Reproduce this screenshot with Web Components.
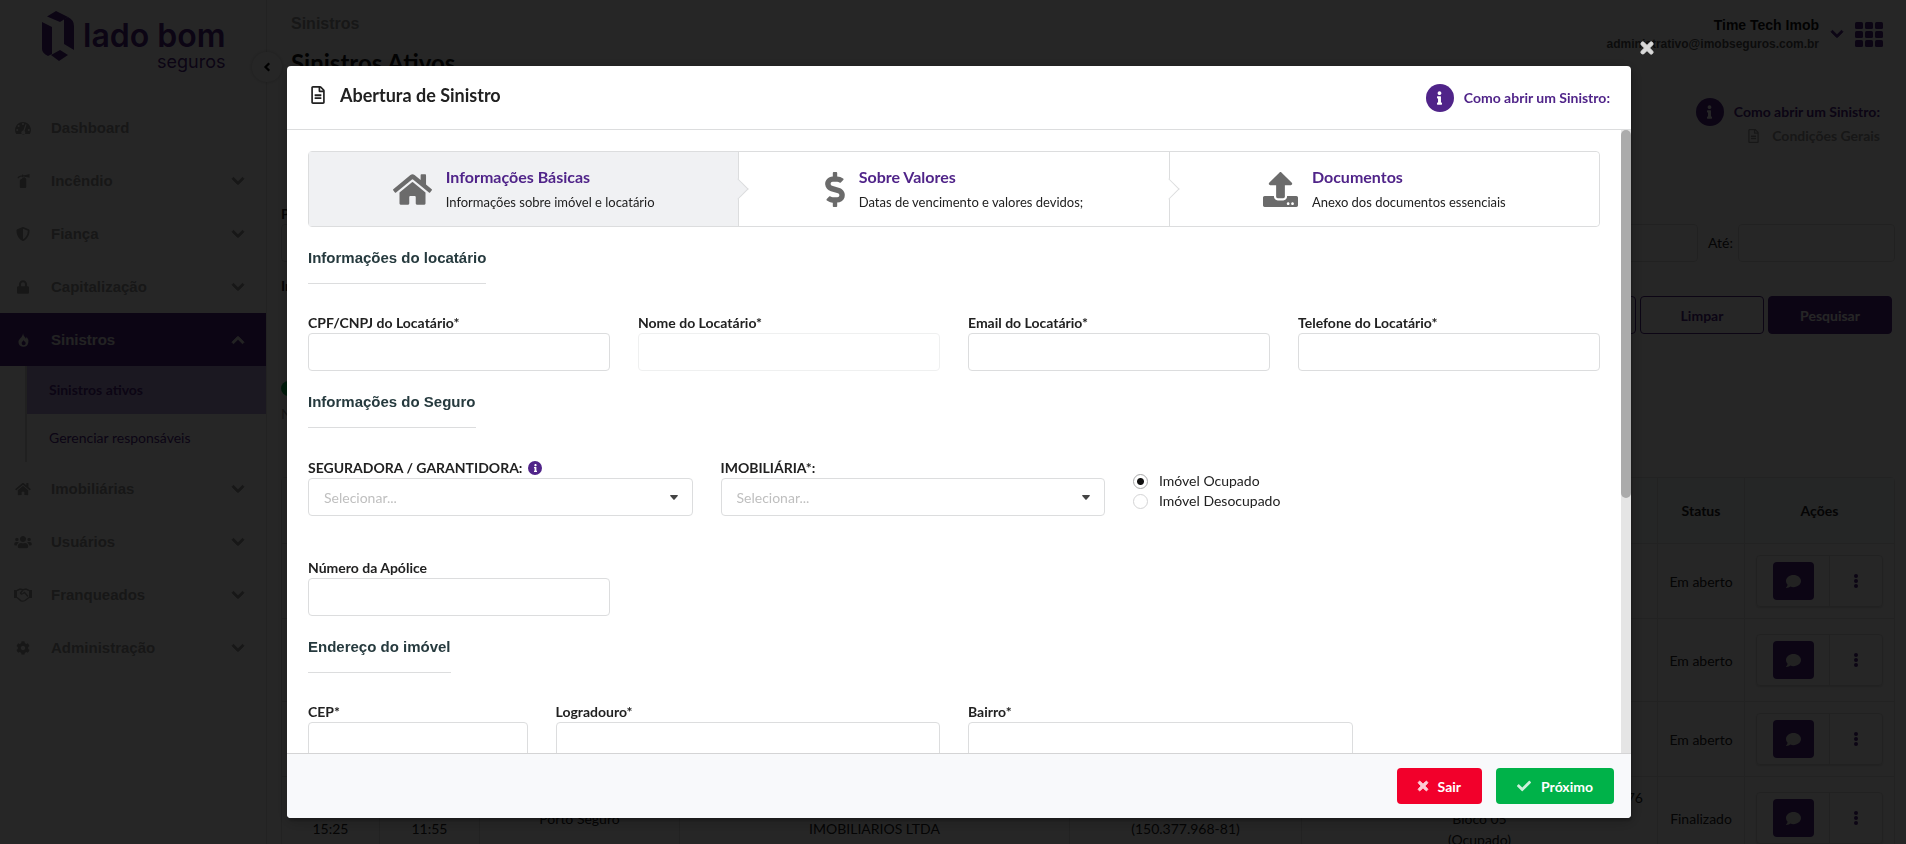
<!DOCTYPE html>
<html lang="pt-BR">
<head>
<meta charset="utf-8">
<title>Sinistros Ativos</title>
<style>
    :root {
        --purple: #502489;
        --line: #dcddde;
        --arial: "Liberation Sans", Arial, sans-serif;
    }
    * { box-sizing: border-box; }
    body {
        margin: 0;
        height: 100vh;
        overflow: hidden;
        font: 14px/20px Lato, sans-serif;
        color: #212121;
        background: #fff;
    }
    .app { display: flex; height: 100vh; overflow: hidden; }
    side-bar { flex: 0 0 267px; }
    main { flex: 1; min-width: 0; padding: 0 11px 0 14px; }
</style>
</head>
<body>
<div class="app">
    <side-bar></side-bar>
    <main>
        <top-bar></top-bar>
        <claims-filter></claims-filter>
        <claims-table></claims-table>
    </main>
</div>

<claim-modal>
    <span slot="title">Abertura de Sinistro</span>

    <step-list>
        <step-item active icon="home" heading="Informações Básicas">Informações sobre imóvel e locatário</step-item>
        <step-item icon="dollar" heading="Sobre Valores">Datas de vencimento e valores devidos;</step-item>
        <step-item icon="upload" heading="Documentos">Anexo dos documentos essenciais</step-item>
    </step-list>

    <form-section heading="Informações do locatário">
        <text-field span="4" label="CPF/CNPJ do Locatário*"></text-field>
        <text-field span="4" label="Nome do Locatário*" disabled></text-field>
        <text-field span="4" label="Email do Locatário*"></text-field>
        <text-field span="4" label="Telefone do Locatário*"></text-field>
    </form-section>

    <form-section heading="Informações do Seguro">
        <select-field span="5" label="SEGURADORA / GARANTIDORA:" info></select-field>
        <select-field span="5" label="IMOBILIÁRIA*:"></select-field>
        <occupancy-choice span="6"></occupancy-choice>
        <text-field span="4" label="Número da Apólice"></text-field>
    </form-section>

    <form-section heading="Endereço do imóvel">
        <text-field span="3" label="CEP*"></text-field>
        <text-field span="5" label="Logradouro*"></text-field>
        <text-field span="5" label="Bairro*"></text-field>
    </form-section>
</claim-modal>

<script>
// name: [viewBox width, viewBox height, markup]
const ICONS = {
    home: [576, 512, '<path d="M280.37 148.26L96 300.11V464a16 16 0 0 0 16 16l112.06-.29a16 16 0 0 0 15.92-16V368a16 16 0 0 1 16-16h64a16 16 0 0 1 16 16v95.64a16 16 0 0 0 16 16.05L464 480a16 16 0 0 0 16-16V300L295.67 148.26a12.19 12.19 0 0 0-15.3 0zM571.6 251.47L488 182.56V44.05a12 12 0 0 0-12-12h-56a12 12 0 0 0-12 12v72.61L318.47 43a48 48 0 0 0-61 0L4.34 251.47a12 12 0 0 0-1.6 16.9l25.5 31A12 12 0 0 0 45.15 301l235.22-193.74a12.19 12.19 0 0 1 15.3 0L530.9 301a12 12 0 0 0 16.9-1.6l25.5-31a12 12 0 0 0-1.7-16.93z"/>'],
    dollar: [288, 512, '<path d="M209.2 233.4l-108-31.6C88.7 198.2 80 186.5 80 173.5c0-16.3 13.2-29.5 29.5-29.5h66.3c12.2 0 24.2 3.7 34.2 10.5 6.1 4.1 14.3 3.1 19.5-2l34.8-34c7.1-6.9 6.1-18.4-1.8-24.5C238 74.8 207.4 64.1 176 64V16c0-8.8-7.2-16-16-16h-32c-8.8 0-16 7.2-16 16v48h-2.5C45.8 64-5.4 118.7.5 183.6c4.2 46.1 39.4 83.6 83.8 96.6l102.5 30c12.5 3.7 21.2 15.3 21.2 28.3 0 16.3-13.2 29.5-29.5 29.5h-66.3C100 368 88 364.3 78 357.5c-6.1-4.1-14.3-3.1-19.5 2l-34.8 34c-7.1 6.9-6.1 18.4 1.8 24.5 24.5 19.2 55.1 29.9 86.5 30v48c0 8.8 7.2 16 16 16h32c8.8 0 16-7.2 16-16v-48.2c46.6-.9 90.3-28.6 105.7-72.7 21.5-61.6-14.6-124.8-72.5-141.7z"/>'],
    upload: [512, 512, '<path d="M296 384h-80c-13.3 0-24-10.7-24-24V192h-87.7c-17.8 0-26.7-21.5-14.1-34.1L242.3 5.7c7.5-7.5 19.8-7.5 27.3 0l152.2 152.2c12.6 12.6 3.7 34.1-14.1 34.1H320v168c0 13.3-10.7 24-24 24zm216-8v112c0 13.3-10.7 24-24 24H24c-13.3 0-24-10.7-24-24V376c0-13.3 10.7-24 24-24h136v8c0 30.9 25.1 56 56 56h80c30.9 0 56-25.1 56-56v-8h136c13.3 0 24 10.7 24 24zm-124 88c0-11-9-20-20-20s-20 9-20 20 9 20 20 20 20-9 20-20zm64 0c0-11-9-20-20-20s-20 9-20 20 9 20 20 20 20-9 20-20z"/>'],
    file: [384, 512, '<path d="M288 248v28c0 6.6-5.4 12-12 12H108c-6.6 0-12-5.4-12-12v-28c0-6.6 5.4-12 12-12h168c6.6 0 12 5.4 12 12zm-12 72H108c-6.6 0-12 5.4-12 12v28c0 6.6 5.4 12 12 12h168c6.6 0 12-5.4 12-12v-28c0-6.6-5.4-12-12-12zm108-188.1V464c0 26.5-21.5 48-48 48H48c-26.5 0-48-21.5-48-48V48C0 21.5 21.5 0 48 0h204.1C264.8 0 277 5.1 286 14.1L369.9 98c9 8.9 14.1 21.2 14.1 33.9zm-128-80V128h76.1L256 51.9zM336 464V176H232c-13.3 0-24-10.7-24-24V48H48v416h288z"/>'],
    info: [192, 512, '<path d="M20 424.229h20V279.771H20c-11.046 0-20-8.954-20-20V212c0-11.046 8.954-20 20-20h112c11.046 0 20 8.954 20 20v212.229h20c11.046 0 20 8.954 20 20V492c0 11.046-8.954 20-20 20H20c-11.046 0-20-8.954-20-20v-47.771c0-11.046 8.954-20 20-20zM96 0C56.235 0 24 32.235 24 72s32.235 72 72 72 72-32.235 72-72S135.764 0 96 0z"/>'],
    times: [352, 512, '<path stroke="currentColor" stroke-width="36" d="M242.72 256l100.07-100.07c12.28-12.28 12.28-32.19 0-44.48l-22.24-22.24c-12.28-12.28-32.19-12.28-44.48 0L176 189.28 75.93 89.21c-12.28-12.28-32.19-12.28-44.48 0L9.21 111.45c-12.28 12.28-12.28 32.19 0 44.48L109.28 256 9.21 356.07c-12.28 12.28-12.28 32.19 0 44.48l22.24 22.24c12.28 12.28 32.2 12.28 44.48 0L176 322.72l100.07 100.07c12.28 12.28 32.2 12.28 44.48 0l22.24-22.24c12.28-12.28 12.28-32.19 0-44.48L242.72 256z"/>'],
    check: [512, 512, '<path d="M173.898 439.404l-166.4-166.4c-9.997-9.997-9.997-26.206 0-36.204l36.203-36.204c9.997-9.998 26.207-9.998 36.204 0L192 312.69 432.095 72.596c9.997-9.997 26.207-9.997 36.204 0l36.203 36.204c9.997 9.997 9.997 26.206 0 36.204l-294.4 294.401c-9.998 9.997-26.207 9.997-36.204-.001z"/>'],
    down: [448, 512, '<path stroke="currentColor" stroke-width="36" d="M207.029 381.476L12.686 187.132c-9.373-9.373-9.373-24.569 0-33.941l22.667-22.667c9.357-9.357 24.522-9.375 33.901-.04L224 284.505l154.745-154.021c9.379-9.335 24.544-9.317 33.901.04l22.667 22.667c9.373 9.373 9.373 24.569 0 33.941L240.971 381.476c-9.373 9.372-24.569 9.372-33.942 0z"/>'],
    up: [448, 512, '<path stroke="currentColor" stroke-width="36" transform="rotate(180 224 256)" d="M207.029 381.476L12.686 187.132c-9.373-9.373-9.373-24.569 0-33.941l22.667-22.667c9.357-9.357 24.522-9.375 33.901-.04L224 284.505l154.745-154.021c9.379-9.335 24.544-9.317 33.901.04l22.667 22.667c9.373 9.373 9.373 24.569 0 33.941L240.971 381.476c-9.373 9.372-24.569 9.372-33.942 0z"/>'],
    left: [10, 16, '<path d="M8 3L3 8l5 5" fill="none" stroke="currentColor" stroke-width="3"/>'],
    caret: [8, 5, '<path d="M.8 0h6.400q1.200 0 .5.900L4.600 4.600q-.6.6-1.200 0L.3.900Q-.4 0 .8 0z"/>'],
    apps: [28, 25, '<rect width="8" height="7" rx="1.5"/><rect x="10" width="8" height="7" rx="1.5"/><rect x="20" width="8" height="7" rx="1.5"/><rect y="9" width="8" height="7" rx="1.5"/><rect x="10" y="9" width="8" height="7" rx="1.5"/><rect x="20" y="9" width="8" height="7" rx="1.5"/><rect y="18" width="8" height="7" rx="1.5"/><rect x="10" y="18" width="8" height="7" rx="1.5"/><rect x="20" y="18" width="8" height="7" rx="1.5"/>'],
    gauge: [16, 14, '<path fill-rule="evenodd" d="M8 1a8 8 0 0 0-6.900 12h13.800A8 8 0 0 0 8 1zM8 2a1 1 0 1 1 0 2 1 1 0 0 1 0-2zM3.600 4a1 1 0 1 1 0 2 1 1 0 0 1 0-2zM2.200 8a1 1 0 1 1 0 2 1 1 0 0 1 0-2zM13.800 8a1 1 0 1 1 0 2 1 1 0 0 1 0-2zM10.500 3.200l1 .4-2 6.400a2 2 0 1 1-1.200-.4z"/>'],
    extinguisher: [14, 15, '<path d="M5 5.500A3 3 0 0 1 8 3.500a3 3 0 0 1 2 2V14q0 1-1 1H4q-1 0-1-1V7a3 3 0 0 1 2-2z"/><path d="M1 4.500Q2 2 6 2h7M6 .5v3" fill="none" stroke="currentColor" stroke-width="1.300"/><path d="M8 1.200L13.500 0v4L8 3z"/>'],
    shield: [512, 512, '<path d="M466.5 83.7l-192-80a48.15 48.15 0 0 0-36.9 0l-192 80C27.7 91.1 16 108.6 16 128c0 198.5 114.5 335.7 221.5 380.3 11.8 4.9 25.1 4.9 36.9 0C360.1 472.6 496 349.3 496 128c0-19.4-11.7-36.9-29.5-44.3zM256.1 446.3l-.1-381 175.9 73.3c-3.3 151.4-82.1 261.1-175.8 307.7z"/>'],
    lock: [448, 512, '<path d="M400 224h-24v-72C376 68.2 307.8 0 224 0S72 68.2 72 152v72H48c-26.5 0-48 21.5-48 48v192c0 26.5 21.5 48 48 48h352c26.5 0 48-21.5 48-48V272c0-26.5-21.5-48-48-48zm-104 0H152v-72c0-39.7 32.3-72 72-72s72 32.3 72 72v72z"/>'],
    fire: [12, 15, '<path fill-rule="evenodd" d="M5.500 0C6 3.500 8 4 8.500 6q1-.8.9-2Q12 7 11.200 10.500A5.400 5.400 0 0 1 .5 9.500C.5 6 5 5 5.500 0zM6 7.500C5.500 9 4 9.500 4 11a2.200 2.200 0 0 0 4.400 0C8.400 9.500 6.500 9 6 7.500z"/>'],
    users: [640, 512, '<path d="M96 224c35.3 0 64-28.7 64-64s-28.700-64-64-64-64 28.700-64 64 28.700 64 64 64zm448 0c35.300 0 64-28.700 64-64s-28.700-64-64-64-64 28.700-64 64 28.700 64 64 64zm32 32h-64c-17.600 0-33.500 7.100-45.100 18.600 40.300 22.100 68.900 62 75.100 109.400h66c17.700 0 32-14.300 32-32v-32c0-35.300-28.700-64-64-64zm-256 0c61.900 0 112-50.100 112-112S381.900 32 320 32 208 82.100 208 144s50.100 112 112 112zm76.800 32h-8.300c-20.800 10-43.900 16-68.500 16s-47.600-6-68.500-16h-8.300C179.600 288 128 339.600 128 403.200V432c0 26.500 21.500 48 48 48h288c26.500 0 48-21.500 48-48v-28.800c0-63.600-51.600-115.200-115.200-115.200zm-223.700-13.400C161.500 263.100 145.600 256 128 256H64c-35.300 0-64 28.700-64 64v32c0 17.700 14.300 32 32 32h65.900c6.300-47.400 34.900-87.300 75.200-109.400z"/>'],
    handshake: [18, 14, '<path d="M0 2h3v8H0zM15 2h3v8h-3z"/><path d="M3 2.500L6 1l3 .8L12 1l3 1.500M3 9.500l4 3.300q2 .8 4-.3l4-3M9 2L6.500 5q.5 1.700 2.500.5L10.500 4.500 14 8.500" fill="none" stroke="currentColor" stroke-width="1.400"/>'],
    cog: [512, 512, '<path d="M487.4 315.7l-42.6-24.6c4.3-23.2 4.3-47 0-70.2l42.6-24.6c4.9-2.8 7.1-8.6 5.5-14-11.1-35.6-30-67.8-54.7-94.6-3.8-4.1-10-5.1-14.8-2.3L380.8 110c-17.9-15.4-38.5-27.3-60.8-35.1V25.8c0-5.6-3.9-10.5-9.4-11.7-36.7-8.2-74.3-7.8-109.2 0-5.500 1.200-9.400 6.100-9.400 11.700V75c-22.200 7.900-42.800 19.800-60.800 35.100L88.700 85.500c-4.900-2.800-11-1.900-14.800 2.300-24.700 26.700-43.600 58.900-54.700 94.600-1.700 5.400.6 11.200 5.500 14L67.300 221c-4.300 23.200-4.300 47 0 70.200l-42.600 24.600c-4.900 2.800-7.100 8.600-5.500 14 11.100 35.600 30 67.800 54.700 94.600 3.800 4.100 10 5.100 14.800 2.300l42.600-24.600c17.900 15.400 38.500 27.300 60.800 35.100v49.200c0 5.600 3.900 10.500 9.400 11.700 36.700 8.200 74.300 7.800 109.200 0 5.500-1.200 9.400-6.100 9.400-11.700v-49.200c22.200-7.900 42.800-19.800 60.800-35.100l42.600 24.600c4.900 2.800 11 1.900 14.800-2.300 24.700-26.700 43.600-58.900 54.700-94.600 1.500-5.500-.7-11.300-5.600-14.100zM256 336c-44.100 0-80-35.900-80-80s35.900-80 80-80 80 35.900 80 80-35.900 80-80 80z"/>'],
    comment: [512, 512, '<path d="M256 32C114.6 32 0 125.1 0 240c0 49.6 21.4 95 57 130.7C44.5 421.1 2.7 466 2.2 466.5c-2.2 2.3-2.8 5.7-1.5 8.7S4.8 480 8 480c66.3 0 116-31.8 140.6-51.4 32.7 12.3 69 19.4 107.4 19.4 141.4 0 256-93.1 256-208S397.4 32 256 32z"/>'],
    dots: [4, 14, '<circle cx="2" cy="2" r="2"/><circle cx="2" cy="7" r="2"/><circle cx="2" cy="12" r="2"/>']
};

class UiIcon extends HTMLElement {
    constructor() {
        super();
        this.attachShadow({ mode: 'open' });
    }
    connectedCallback() {
        const [w, h, body] = ICONS[this.getAttribute('name')];
        const size = Number(this.getAttribute('size'));
        this.shadowRoot.innerHTML = `
            <style>
                :host { display: inline-flex; flex: none; }
                svg { display: block; fill: currentColor; overflow: visible; }
            </style>
            <svg viewBox="0 0 ${w} ${h}" width="${Math.round(size * w / h)}" height="${size}" aria-hidden="true">${body}</svg>
        `;
    }
}
customElements.define('ui-icon', UiIcon);

class InfoLink extends HTMLElement {
    constructor() {
        super();
        this.attachShadow({ mode: 'open' });
        this.shadowRoot.innerHTML = `
            <style>
                :host { display: block; }
                a {
                    display: flex;
                    align-items: center;
                    gap: 10px;
                    color: var(--purple);
                    font-weight: 700;
                    text-decoration: none;
                }
                .dot {
                    display: grid;
                    place-items: center;
                    width: 28px;
                    height: 28px;
                    border-radius: 50%;
                    background: var(--purple);
                    color: #fff;
                }
            </style>
            <a href="#"><span class="dot"><ui-icon name="info" size="14"></ui-icon></span>Como abrir um Sinistro:</a>
        `;
    }
}
customElements.define('info-link', InfoLink);

class SideBar extends HTMLElement {
    constructor() {
        super();
        this.attachShadow({ mode: 'open' });
        const item = (icon, label, arrow = 'down', cls = '') => `
            <a class="item ${cls}" href="#">
                <span class="pic"><ui-icon name="${icon}" size="14"></ui-icon></span>
                <span class="label">${label}</span>
                ${arrow ? `<ui-icon name="${arrow}" size="14"></ui-icon>` : ''}
            </a>`;
        this.shadowRoot.innerHTML = `
            <style>
                :host {
                    display: block;
                    position: relative;
                    box-sizing: border-box;
                    border-right: 1px solid #e4e4e4;
                }
                .logo { display: flex; gap: 9px; box-sizing: border-box; padding: 11px 0 0 42px; height: 101px; color: var(--purple); }
                .brand { display: flex; flex-direction: column; align-items: flex-end; font-family: Inter, sans-serif; }
                .brand b { font-size: 32px; line-height: 36px; font-weight: 600; margin-top: 7px; }
                .brand span { font-size: 18px; line-height: 16px; font-weight: 400; }
                a { color: #9a9a9a; text-decoration: none; }
                .item {
                    display: flex;
                    align-items: center;
                    height: 53px;
                    padding: 0 22px 0 14px;
                    font: 700 15px var(--arial);
                }
                .pic { width: 18px; display: flex; justify-content: center; }
                .label { flex: 1; padding-left: 19px; }
                .active { background: var(--purple); color: #e6e6e6; }
                .sub { margin-left: 25px; border-left: 2px solid #d5d5d5; }
                .sub a {
                    display: flex;
                    align-items: center;
                    height: 48px;
                    padding-left: 22px;
                    color: var(--purple);
                }
                .sub .current { background: #b6a3da; font-weight: 700; }
                button {
                    position: absolute;
                    top: 52px;
                    right: -16px;
                    display: grid;
                    place-items: center;
                    width: 30px;
                    height: 30px;
                    padding: 0;
                    border: 0;
                    border-radius: 50%;
                    background: #fff;
                    box-shadow: 0 0 4px rgba(0, 0, 0, .25);
                }
            </style>
            <div class="logo">
                <svg width="32" height="51" viewBox="0 0 32 51" fill="currentColor" aria-hidden="true">
                    <path d="M0 11l10 5v27l-4 2Q0 42 0 38z"/>
                    <path d="M9 44l9-5 8 5-9 6z"/>
                    <path d="M5 5.500L14 0l12 6-8 5z"/>
                    <path d="M22 8l4-2q6 3 6 9v24l-10-6z"/>
                </svg>
                <div class="brand"><b>lado bom</b><span>seguros</span></div>
            </div>
            <button aria-label="Recolher menu"><ui-icon name="left" size="12"></ui-icon></button>
            <nav>
                ${item('gauge', 'Dashboard', '')}
                ${item('extinguisher', 'Incêndio')}
                ${item('shield', 'Fiança')}
                ${item('lock', 'Capitalização')}
                ${item('fire', 'Sinistros', 'up', 'active')}
                <div class="sub">
                    <a class="current" href="#">Sinistros ativos</a>
                    <a href="#">Gerenciar responsáveis</a>
                </div>
                ${item('home', 'Imobiliárias')}
                ${item('users', 'Usuários')}
                ${item('handshake', 'Franqueados')}
                ${item('cog', 'Administração')}
            </nav>
        `;
    }
}
customElements.define('side-bar', SideBar);

class TopBar extends HTMLElement {
    constructor() {
        super();
        this.attachShadow({ mode: 'open' });
        this.shadowRoot.innerHTML = `
            <style>
                :host { display: flex; justify-content: space-between; height: 204px; padding: 14px 12px 0 10px; box-sizing: border-box; }
                .crumb { font: 700 16px/20px var(--arial); color: #9a9a9a; }
                h1 { margin: 14px 0 0; font-size: 24px; line-height: 30px; color: #111; }
                .right { display: flex; flex-direction: column; align-items: flex-end; }
                .user { display: flex; align-items: center; height: 40px; text-align: right; font-family: var(--arial); font-weight: 700; }
                .name { font-size: 14px; color: #111; }
                .mail { font-size: 12px; line-height: 18px; color: #555; }
                .user ui-icon { color: var(--purple); }
                .user button { display: flex; align-items: center; gap: 12px; margin-left: 12px; padding: 0; border: 0; background: none; }
                info-link { margin: 44px 3px 0 0; }
                .terms { display: flex; align-items: center; gap: 13px; margin-right: 3px; color: #9a9a9a; font-weight: 700; text-decoration: none; }
            </style>
            <div>
                <div class="crumb">Sinistros</div>
                <h1>Sinistros Ativos</h1>
            </div>
            <div class="right">
                <div class="user">
                    <div>
                        <div class="name">Time Tech Imob</div>
                        <div class="mail">administrativo@imobseguros.com.br</div>
                    </div>
                    <button aria-label="Conta"><ui-icon name="down" size="14"></ui-icon><ui-icon name="apps" size="25"></ui-icon></button>
                </div>
                <info-link></info-link>
                <a class="terms" href="#"><ui-icon name="file" size="14"></ui-icon>Condições Gerais</a>
            </div>
        `;
    }
}
customElements.define('top-bar', TopBar);

class ClaimsFilter extends HTMLElement {
    constructor() {
        super();
        this.attachShadow({ mode: 'open' });
        this.shadowRoot.innerHTML = `
            <style>
                :host { display: block; height: 273px; }
                label { display: block; height: 20px; font-weight: 700; line-height: 20px; }
                .dates, .actions { display: flex; align-items: center; height: 38px; }
                .dates { margin-bottom: 14px; gap: 5px; }
                .dates input {
                    box-sizing: border-box;
                    flex: 1;
                    min-width: 0;
                    height: 38px;
                    border: 1px solid var(--line);
                    border-radius: 4px;
                }
                .dates .until { flex: 0 0 157px; }
                .dates label { margin-left: 5px; font-weight: 400; }
                .actions { justify-content: flex-end; gap: 4px; padding-right: 3px; }
                button {
                    width: 124px;
                    height: 38px;
                    border: 1px solid var(--purple);
                    border-radius: 4px;
                    background: #fff;
                    color: var(--purple);
                    font: 700 14px Lato, sans-serif;
                }
                .fill { background: var(--purple); color: #fff; }
                .dot { width: 15px; height: 15px; margin: 47px 0 8px; border-radius: 50%; background: #00b249; }
                p { margin: 0; color: #999; }
            </style>
            <label for="from">Período</label>
            <div class="dates">
                <input id="from">
                <label for="until">Até:</label>
                <input id="until" class="until">
            </div>
            <label>Imobiliária</label>
            <div class="actions">
                <button aria-label="Exportar"></button>
                <button>Limpar</button>
                <button class="fill">Pesquisar</button>
            </div>
            <div class="dot"></div>
            <p>N</p>
        `;
    }
}
customElements.define('claims-filter', ClaimsFilter);

class ClaimsTable extends HTMLElement {
    constructor() {
        super();
        this.attachShadow({ mode: 'open' });
        const actions = `
            <div class="group">
                <span class="cell"><button class="chat" aria-label="Mensagens"><ui-icon name="comment" size="15"></ui-icon></button></span>
                <span class="cell more"><button aria-label="Mais ações"><ui-icon name="dots" size="14"></ui-icon></button></span>
            </div>`;
        const empty = '<td></td>'.repeat(6);
        this.shadowRoot.innerHTML = `
            <style>
                :host { display: block; }
                table {
                    width: 100%;
                    table-layout: fixed;
                    border: 1px solid #e2e2e2;
                    border-radius: 4px;
                    border-spacing: 0;
                    line-height: 21px;
                }
                th, td { padding: 0 11px; border-right: 1px solid #e2e2e2; text-align: center; }
                td { border-top: 1px solid #e2e2e2; }
                th:last-child, td:last-child { border-right: 0; }
                th { height: 65px; background: #f9fafb; }
                td { height: 74px; }
                .tall td { height: 82px; }
                .end { display: block; padding-right: 3px; text-align: right; }
                .group { display: flex; height: 52px; box-sizing: border-box; border: 1px solid #dedede; border-radius: 4px; box-shadow: 0 1px 2px rgba(0, 0, 0, .15); }
                .cell { flex: 1 0 72px; display: grid; place-items: center; }
                .more { flex: 1 0 52px; border-left: 1px solid #dedede; }
                button { display: grid; place-items: center; padding: 0; border: 0; background: none; color: var(--purple); }
                .chat { width: 41px; height: 38px; border-radius: 4px; background: var(--purple); color: #e0e0e0; }
            </style>
            <table>
                <colgroup>
                    <col style="width: 98px"><col style="width: 100px"><col style="width: 200px"><col>
                    <col style="width: 232px"><col style="width: 356px"><col style="width: 87px"><col style="width: 149px">
                </colgroup>
                <tr><th></th><th></th><th></th><th></th><th></th><th></th><th>Status</th><th>Ações</th></tr>
                <tr>${empty}<td>Em aberto</td><td>${actions}</td></tr>
                <tr class="tall">${empty}<td>Em aberto</td><td>${actions}</td></tr>
                <tr>${empty}<td>Em aberto</td><td>${actions}</td></tr>
                <tr class="tall">
                    <td><br>15:25</td><td><br>11:55</td><td>Porto Seguro</td><td><br>IMOBILIARIOS LTDA</td>
                    <td><br>(150.377.968-81)</td><td><span class="end">76</span>Bloco 05<br>(Ocupado)</td>
                    <td>Finalizado</td><td>${actions}</td>
                </tr>
            </table>
        `;
    }
}
customElements.define('claims-table', ClaimsTable);

class ClaimModal extends HTMLElement {
    constructor() {
        super();
        this.attachShadow({ mode: 'open' });
        this.shadowRoot.innerHTML = `
            <style>
                :host {
                    position: fixed;
                    inset: 0;
                    display: grid;
                    box-sizing: border-box;
                    padding: 66px 275px 26px 287px;
                    background: rgba(0, 0, 0, .85);
                }
                .modal {
                    position: relative;
                    display: flex;
                    flex-direction: column;
                    min-height: 0;
                    border-radius: 4px;
                    background: #fff;
                    box-shadow: 1px 3px 3px rgba(0, 0, 0, .2), 1px 3px 15px 2px rgba(0, 0, 0, .2);
                }
                .close {
                    position: absolute;
                    top: -27px;
                    right: -22px;
                    padding: 0;
                    border: 0;
                    background: none;
                    color: #d9d9d9;
                }
                header {
                    display: flex;
                    align-items: center;
                    height: 64px;
                    box-sizing: border-box;
                    padding: 0 21px 0 24px;
                    border-bottom: 1px solid var(--line);
                }
                h2 { flex: 1; margin: 0 0 6px; display: flex; align-items: center; gap: 15px; font-size: 18px; line-height: 24px; }
                .scroll { flex: 1; min-height: 0; display: flex; }
                .body { flex: 1; min-width: 0; overflow: hidden; padding: 21px 21px 0; }
                .track { flex: 0 0 10px; background: #e5e5e5; }
                .thumb { height: 59%; border-radius: 5px; background: #ababab; }
                footer {
                    display: flex;
                    justify-content: flex-end;
                    gap: 14px;
                    padding: 14px 17px;
                    border-top: 1px solid #d4d4d5;
                    border-radius: 0 0 4px 4px;
                    background: #f8f9fb;
                }
                footer button {
                    display: flex;
                    align-items: center;
                    gap: 10px;
                    height: 36px;
                    padding: 0 21px;
                    border: 0;
                    border-radius: 4px;
                    color: #fff;
                    font: 700 14px Lato, sans-serif;
                }
                footer ui-icon { opacity: .8; }
                .red { background: #f2002b; }
                .green { background: #00b249; }
            </style>
            <div class="modal" role="dialog" aria-modal="true">
                <button class="close" aria-label="Fechar"><ui-icon name="times" size="18"></ui-icon></button>
                <header>
                    <h2><ui-icon name="file" size="18"></ui-icon><slot name="title"></slot></h2>
                    <info-link></info-link>
                </header>
                <div class="scroll">
                    <div class="body"><slot></slot></div>
                    <div class="track"><div class="thumb"></div></div>
                </div>
                <footer>
                    <button class="red"><ui-icon name="times" size="14"></ui-icon>Sair</button>
                    <button class="green"><ui-icon name="check" size="14"></ui-icon>Próximo</button>
                </footer>
            </div>
        `;
    }
}
customElements.define('claim-modal', ClaimModal);

class StepList extends HTMLElement {
    constructor() {
        super();
        this.attachShadow({ mode: 'open' });
        this.shadowRoot.innerHTML = `
            <style>
                :host {
                    display: flex;
                    height: 76px;
                    box-sizing: border-box;
                    border: 1px solid var(--line);
                    border-radius: 4px;
                }
            </style>
            <slot></slot>
        `;
    }
}
customElements.define('step-list', StepList);

class StepItem extends HTMLElement {
    constructor() {
        super();
        this.attachShadow({ mode: 'open' });
    }
    connectedCallback() {
        this.shadowRoot.innerHTML = `
            <style>
                :host {
                    position: relative;
                    flex: 1;
                    display: flex;
                    align-items: center;
                    justify-content: center;
                    gap: 14px;
                    border-right: 1px solid var(--line);
                    background: #fff;
                }
                :host([active]) { background: #f0f1f3; }
                :host(:last-child) { border-right: 0; border-radius: 4px; }
                /* arrow pointing at the next step */
                :host::after {
                    content: "";
                    position: absolute;
                    z-index: 1;
                    top: 50%;
                    right: 0;
                    width: 14px;
                    height: 14px;
                    border: solid var(--line);
                    border-width: 1px 1px 0 0;
                    background: inherit;
                    transform: translate(50%, -50%) rotate(45deg);
                }
                :host(:last-child)::after { display: none; }
                ui-icon { color: #6b6b6b; }
                .title { color: var(--purple); font-size: 16px; font-weight: 700; line-height: 20px; }
                .text { margin-top: 5px; font-size: 13px; line-height: 20px; }
            </style>
            <ui-icon name="${this.getAttribute('icon')}" size="35"></ui-icon>
            <div>
                <div class="title">${this.getAttribute('heading')}</div>
                <div class="text"><slot></slot></div>
            </div>
        `;
    }
}
customElements.define('step-item', StepItem);

class FormSection extends HTMLElement {
    constructor() {
        super();
        this.attachShadow({ mode: 'open' });
    }
    connectedCallback() {
        this.shadowRoot.innerHTML = `
            <style>
                :host { display: block; margin-top: 22px; }
                h3 {
                    width: max-content;
                    margin: 0 0 29px;
                    padding-bottom: 16px;
                    border-bottom: 1px solid var(--line);
                    color: #263a3e;
                    font: 700 15px/18px var(--arial);
                }
                .grid { display: grid; grid-template-columns: repeat(16, 1fr); gap: 42px 28px; }
            </style>
            <h3>${this.getAttribute('heading')}</h3>
            <div class="grid"><slot></slot></div>
        `;
        for (const child of this.children) {
            child.style.gridColumn = `span ${child.getAttribute('span')}`;
        }
    }
}
customElements.define('form-section', FormSection);

const FIELD_STYLE = `
    :host { display: block; min-width: 0; }
    label { display: flex; align-items: center; gap: 6px; height: 20px; font-weight: 700; }
    input, select {
        display: block;
        box-sizing: border-box;
        width: 100%;
        height: 38px;
        padding: 0 15px;
        border: 1px solid var(--line);
        border-radius: 4px;
        background: #fff;
        font: 14px Lato, sans-serif;
    }
`;

class TextField extends HTMLElement {
    constructor() {
        super();
        this.attachShadow({ mode: 'open' });
    }
    connectedCallback() {
        this.shadowRoot.innerHTML = `
            <style>
                ${FIELD_STYLE}
                input:disabled { opacity: .45; }
            </style>
            <label for="field">${this.getAttribute('label')}</label>
            <input id="field" type="text" ${this.hasAttribute('disabled') ? 'disabled' : ''}>
        `;
    }
}
customElements.define('text-field', TextField);

class SelectField extends HTMLElement {
    constructor() {
        super();
        this.attachShadow({ mode: 'open' });
    }
    connectedCallback() {
        this.shadowRoot.innerHTML = `
            <style>
                ${FIELD_STYLE}
                label { height: 21px; }
                select { appearance: none; color: #bfbfbf; }
                .box { display: grid; align-items: center; }
                .box > * { grid-area: 1 / 1; }
                .box ui-icon { justify-self: end; margin-right: 15px; color: #444; pointer-events: none; }
                .dot {
                    display: grid;
                    place-items: center;
                    width: 14px;
                    height: 14px;
                    border-radius: 50%;
                    background: var(--purple);
                    color: #fff;
                }
            </style>
            <label for="field">${this.getAttribute('label')}
                ${this.hasAttribute('info') ? '<span class="dot"><ui-icon name="info" size="8"></ui-icon></span>' : ''}
            </label>
            <div class="box">
                <select id="field"><option>Selecionar...</option></select>
                <ui-icon name="caret" size="5"></ui-icon>
            </div>
        `;
    }
}
customElements.define('select-field', SelectField);

class OccupancyChoice extends HTMLElement {
    constructor() {
        super();
        this.attachShadow({ mode: 'open' });
        this.shadowRoot.innerHTML = `
            <style>
                :host { display: block; padding-top: 14px; }
                label { display: flex; align-items: center; gap: 11px; height: 20px; }
                input {
                    appearance: none;
                    box-sizing: border-box;
                    width: 15px;
                    height: 15px;
                    margin: 0;
                    border: 1px solid #d4d4d5;
                    border-radius: 50%;
                    background: #fff;
                }
                input:checked {
                    border-color: #a8a9aa;
                    background: radial-gradient(circle, #111 3px, #fff 4px);
                }
            </style>
            <label><input type="radio" name="occupancy" checked>Imóvel Ocupado</label>
            <label><input type="radio" name="occupancy">Imóvel Desocupado</label>
        `;
    }
}
customElements.define('occupancy-choice', OccupancyChoice);
</script>
</body>
</html>
